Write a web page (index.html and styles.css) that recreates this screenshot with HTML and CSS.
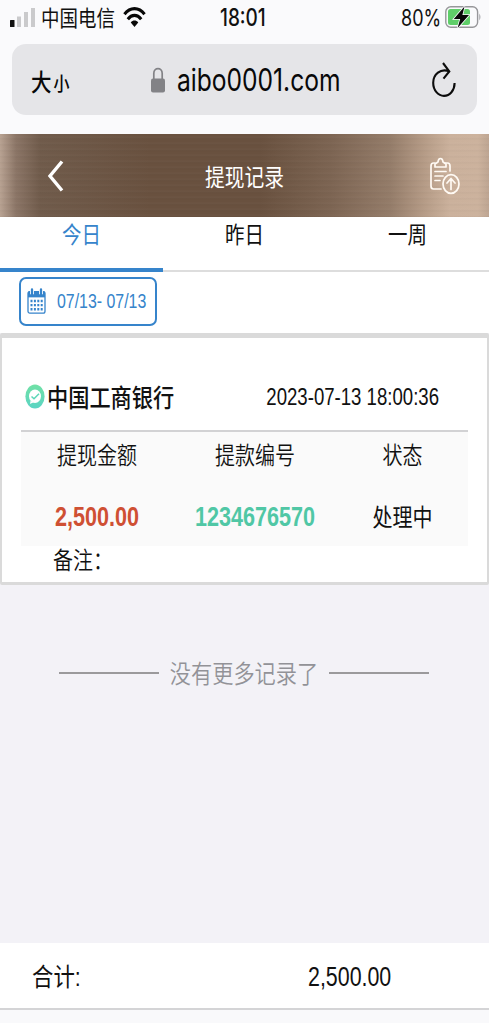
FILE: index.html
```html
<!DOCTYPE html>
<html lang="zh-CN">
<head>
<meta charset="utf-8">
<meta name="viewport" content="width=device-width">
<title>提现记录</title>
<link rel="stylesheet" href="styles.css">
</head>
<body>
<div class="browser">
  <div class="status">
    <svg class="signal" width="26" height="21" viewBox="0 0 26 21"><rect x="0" y="13" width="4.500" height="7" rx=".5" fill="#111"/><path d="M7 9.500h4v10.500h-4zM14 5h4v15h-4zM21 1h4v19h-4z" fill="#cacacc"/></svg>
    <span class="carrier hanzi">中国电信</span>
    <svg class="wifi" width="23" height="22" viewBox="0 0 24 22" preserveAspectRatio="none"><g fill="none" stroke="#080808" stroke-width="3.200"><path d="M1.500 8.300C7.500.8 16.500.8 22.500 8.300"/><path d="M5 13.200c4.200-5.200 9.800-5.200 14 0"/></g><path d="M8.100 16.400c2.300-2.500 5.500-2.500 7.800 0L12 21z" fill="#080808"/></svg>
    <span class="clock tall">18:01</span>
    <span class="percent tall">80%</span>
    <svg class="battery" width="37" height="24" viewBox="0 0 37 24"><rect x=".8" y="1.800" width="31.800" height="20.400" rx="5" fill="#fafafc" stroke="#97979a" stroke-width="1.400"/><path d="M34.400 8.500q2 3.500 0 7z" fill="#97979a"/><rect x="3" y="4" width="22" height="16" rx="2.500" fill="#5fce69"/><path d="M19.500 1.500L8.800 14h6.400l-2.600 9L24 10h-6.600z" fill="#080808" stroke="#fafafc" stroke-width="1.600" paint-order="stroke"/></svg>
  </div>
  <div class="address">
    <span class="text-size"><span class="big hanzi">大</span><span class="small hanzi">小</span></span>
    <svg class="lock" width="14" height="26" viewBox="0 0 14 26"><path d="M2.800 12V6.500C2.800 0 11.200 0 11.200 6.500V12" fill="none" stroke="#828286" stroke-width="1.700"/><rect x="0" y="11.500" width="14" height="14" rx="2" fill="#828286"/></svg>
    <span class="url tall">aibo0001.com</span>
    <svg class="reload" width="24" height="36" viewBox="0 0 24 36"><path d="M17.300 9.400C8.500 5.800 1.200 12.500 1.200 20.800c0 7.500 5 13.100 10.800 13.100s10.600-5.500 10.600-12.900M11 1l6.300 8.400-5.800 7.200" fill="none" stroke="#0c0c0c" stroke-width="2.100"/></svg>
  </div>
</div>
<header class="header">
  <svg class="back" width="18" height="32" viewBox="0 0 18 32"><path d="M15 1.500L3 16l12 14.500" fill="none" stroke="#fff" stroke-width="3.400"/></svg>
  <h1 class="title hanzi">提现记录</h1>
  <svg class="report" width="32" height="38" viewBox="0 0 32 38"><g fill="none" stroke="#fffaf4" stroke-width="1.700" stroke-linecap="round" stroke-linejoin="round"><path d="M6 6H4.500Q2 6 2 9v20q0 3 2.500 3H12M16 6h2.500Q21 6 21 9v5"/><path d="M6 10V7l3-2q.3-3.500 2.500-3.500T14 5l3 2v3zM6 14.500h11M6 19h8M6 23.500h5"/><ellipse cx="22" cy="27" rx="8" ry="9.400"/><path d="M22 32.500V22M18 26l4-4.500 4 4.500"/></g></svg>
</header>
<nav class="tabs">
  <a class="tab active"><span class="hanzi">今日</span></a>
  <a class="tab"><span class="hanzi">昨日</span></a>
  <a class="tab"><span class="hanzi">一周</span></a>
</nav>
<div class="filter">
  <button class="range">
    <svg width="19" height="26" viewBox="0 0 19 25" preserveAspectRatio="none"><rect x="1" y="3.500" width="17" height="20.700" rx="1.800" fill="#fff" stroke="#3684cb" stroke-width="1.300"/><path d="M1 3.500h17v5.500H1z" fill="#3684cb"/><path d="M5 0v6M14 0v6" stroke="#fff" stroke-width="4"/><path d="M5 1.500v4.500M14 1.500v4.500" stroke="#3684cb" stroke-width="2.300" stroke-linecap="round"/><path d="M3.500 12.500h12.500M3.500 16.500h12.500M3.500 20.500h12.500" stroke="#3684cb" stroke-width="2.300" stroke-dasharray="2 1.400"/></svg>
    <span class="tall">07/13- 07/13</span>
  </button>
</div>
<article class="card">
  <div class="card-head">
    <svg class="ok" width="20" height="25" viewBox="0 0 20 25"><defs><linearGradient id="mint" x2="0" y2="1"><stop stop-color="#70e1a5"/><stop offset="1" stop-color="#5bd4c4"/></linearGradient></defs><ellipse cx="10" cy="12.500" rx="9.600" ry="12" fill="url(#mint)"/><ellipse cx="10" cy="12.300" rx="6" ry="6.800" fill="#fff"/><path d="M5.500 17l-.5 3 4-2z" fill="#fff"/><path d="M6.500 12.500l2.500 2.300 5-5" fill="none" stroke="#5dd7b8" stroke-width="1.500"/></svg>
    <span class="bank hanzi">中国工商银行</span>
    <time class="tall">2023-07-13 18:00:36</time>
  </div>
  <div class="details">
    <span class="label hanzi">提现金额</span><span class="label hanzi">提款编号</span><span class="label hanzi">状态</span>
    <b class="amount tall">2,500.00</b><b class="number tall">1234676570</b><span class="state hanzi">处理中</span>
  </div>
  <div class="note"><span class="label hanzi">备注：</span></div>
</article>
<main class="empty"><span class="end"><span class="hanzi">没有更多记录了</span></span></main>
<footer class="total"><span class="hanzi">合计:</span><span class="sum tall">2,500.00</span></footer>
<div class="toolbar"></div>
</body>
</html>
```
FILE: styles.css
```css
* { box-sizing: border-box; }
body {
  margin: 0;
  height: 1023px;
  display: flex;
  flex-direction: column;
  overflow: hidden;
  background: #f3f2f7;
  color: #111;
  font: 20px/30px "Liberation Sans", "Noto Sans CJK SC", sans-serif;
}
svg { display: block; flex: none; }
/* Narrow lettering: glyphs are taller than they are wide. */
.tall, .hanzi { display: inline-block; white-space: nowrap; transform: scaleY(1.25); }
.hanzi { transform: scaleY(1.19); }

.browser { height: 134px; flex: none; background: #fafafc; padding: 0 12px; }
.status { height: 44px; display: flex; align-items: flex-start; margin: 0 -12px; padding-left: 10px; font-family: Inter, "Noto Sans CJK SC", sans-serif; font-size: 18px; }
.signal { margin-top: 7px; }
.carrier { width: 74px; margin: 3px 0 0 5px; font-size: 18.500px; }
.wifi { margin: 6px 0 0 8px; }
.clock { width: 49px; margin: 3px 0 0 74px; font-size: 19px; font-weight: 500; }
.percent { width: 40px; margin: 3px 0 0 132px; }
.battery { margin: 5px 0 0 4px; }
.address { height: 71px; display: flex; align-items: center; border-radius: 14px; background: #e5e5e8; font-family: Inter, "Noto Sans CJK SC", sans-serif; color: #080808; }
.text-size { width: 120px; margin: 7px 0 0 19px; display: flex; align-items: baseline; gap: 2px; font-weight: 500; }
.big { font-size: 20.500px; }
.small { font-size: 16px; }
.url { width: 166px; margin-left: 12px; font-size: 24.600px; }
.reload { margin-left: 89px; }

.header {
  height: 83px; flex: none; display: flex; align-items: center; padding: 1px 28px 0 47px;
  background:
    repeating-linear-gradient(#fff0 0 2px, #ffffff07 3px, #00000007 5px, #fff0 6px),
    linear-gradient(90deg, #b8a292 0, #8b7566 16px, #705b4b 40px, #69513f 150px, #69513f 260px, #7c6452 330px, #947c69 390px, #b69c87 425px, #cbb19c 450px, #ccb29d 478px, #bea592 489px);
}
.title { width: 80px; margin: 3px 0 0 140px; color: #fff; font-size: 19.800px; font-weight: 400; }
.report { margin-left: auto; }

.tabs { height: 55px; flex: none; display: grid; grid-template-columns: repeat(3, 1fr); background: linear-gradient(#ddd, #ddd) 0 53px / 100% 2px no-repeat #fff; }
.tab { text-align: center; padding-top: 3px; font-size: 19.500px; }
.active { color: #3684cb; border-bottom: 4px solid #3684cb; }

.filter { height: 61px; flex: none; padding: 5px 19px; background: #fff; }
.range { width: 138px; height: 49px; padding: 0 0 2px 6px; display: flex; align-items: center; gap: 11px; border: 2px solid #3684cb; border-radius: 7px; background: #fff; color: #3684cb; font: 15.900px/30px "Liberation Sans", sans-serif; }
.range .tall { margin-top: 2px; }

.card { height: 252px; flex: none; padding: 41px 19px 0; background: #fff; border: solid #dadada; border-width: 5px 2px 3px; border-radius: 2px; }
.card-head { height: 51px; display: flex; align-items: center; padding: 0 29px 16px 4px; }
.bank { margin: 4px 0 0 2px; font-size: 21.200px; font-weight: 500; }
.card-head time { margin-left: auto; font-size: 18.600px; }
.details { height: 116px; display: grid; grid-template-columns: 152px 164px 1fr; grid-template-rows: 61px 1fr; justify-items: center; align-items: start; border-top: 2px solid #d2d2d4; background: #fafafa; padding-top: 9px; }
.label { font-weight: 350; }
.amount, .number { font-size: 21.600px; }
.amount { color: #cf5033; }
.number { color: #50c7a5; }
.state { margin-top: 1px; }
.note { padding: 0 32px; }

.empty { flex: 1; display: flex; justify-content: center; padding-top: 73px; }
.end { display: flex; align-items: center; align-self: flex-start; gap: 11px; color: #929297; font-size: 21.200px; font-weight: 350; margin-right: 1px; }
.end .hanzi { margin-top: 2px; margin-bottom: -2px; }
.end::before, .end::after { content: ""; width: 100px; height: 2px; background: #9b9a9c; }

.total { height: 65px; flex: none; display: grid; grid-template-columns: 276px 1fr; align-items: center; padding: 3px 0 0 32px; background: #fff; font-size: 21.400px; }
.total .hanzi { margin-top: 2px; }
.toolbar { height: 15px; flex: none; background: #f9f9fb; border-top: 2px solid #d4d4d6; }
```
